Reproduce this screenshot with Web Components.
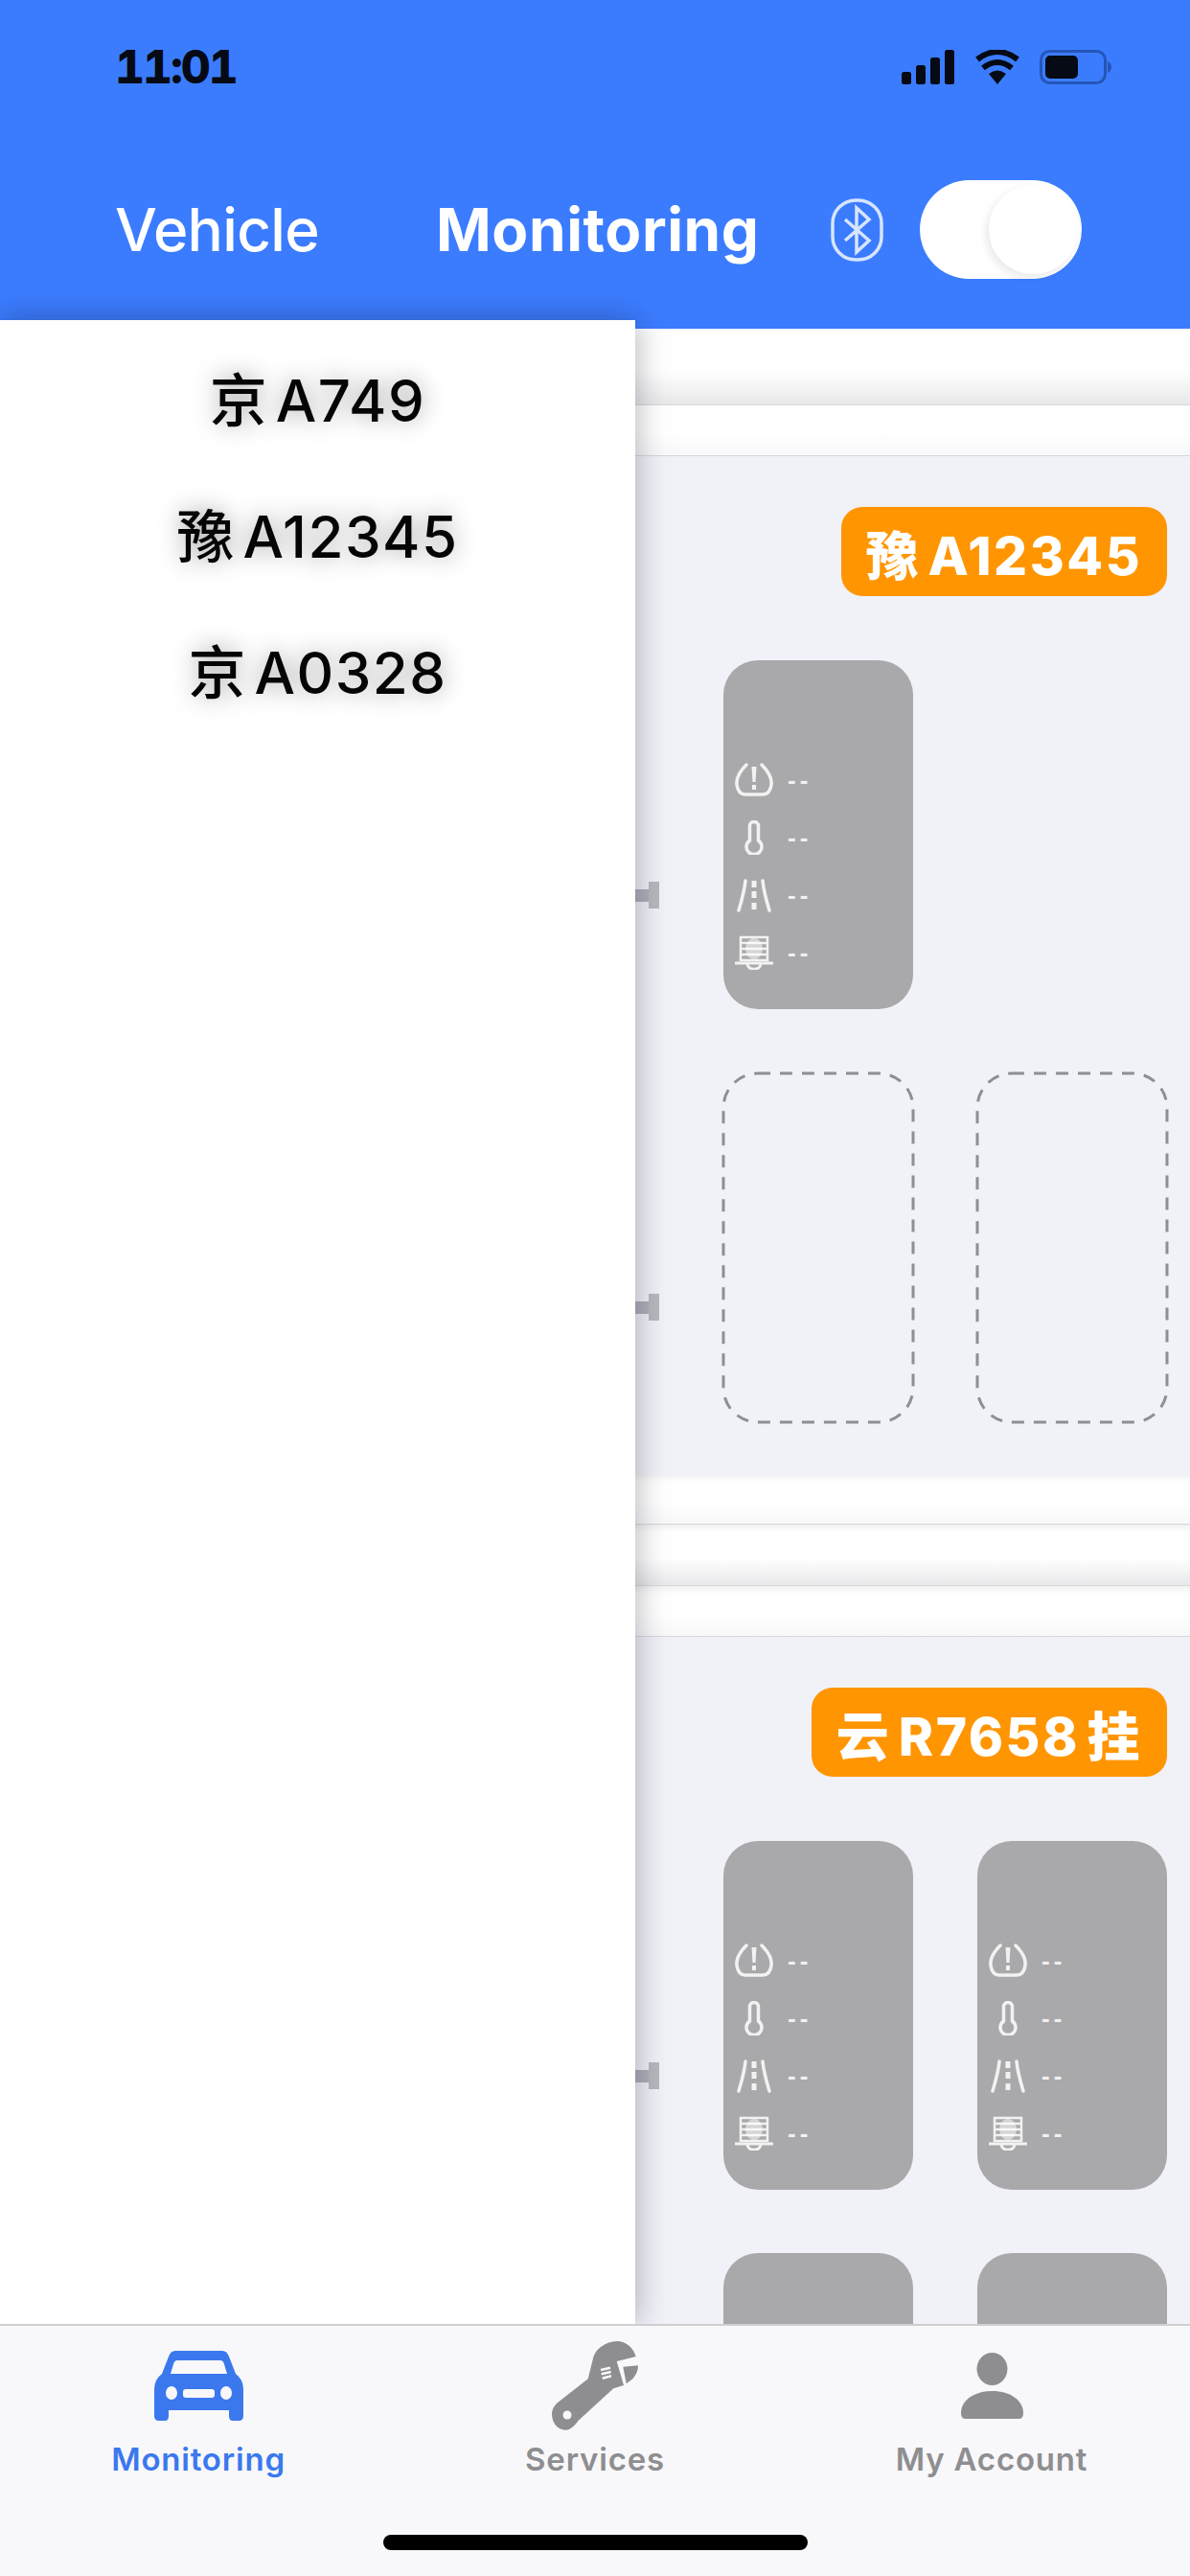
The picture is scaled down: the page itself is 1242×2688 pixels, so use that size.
<!DOCTYPE html>
<html lang="en">
<head>
<meta charset="utf-8">
<title>Monitoring</title>
<style>
  html, body { margin: 0; padding: 0; background: #fff; }
  body { font-family: Inter, "Noto Sans CJK SC", sans-serif; }
</style>
</head>
<body>
<phone-frame>
  <nav-header slot="header"></nav-header>

  <stripe-band size="80" shade="strong"></stripe-band>
  <stripe-band size="53"></stripe-band>
  <vehicle-card plate="豫 A12345">
    <axle-row>
      <tire-card></tire-card>
      <tire-card kind="none"></tire-card>
    </axle-row>
    <axle-row>
      <tire-card kind="empty"></tire-card>
      <tire-card kind="empty"></tire-card>
    </axle-row>
  </vehicle-card>
  <stripe-band size="53" top></stripe-band>
  <stripe-band size="64" shade="strong" top></stripe-band>
  <stripe-band size="53" top></stripe-band>
  <vehicle-card plate="云 R7658 挂">
    <axle-row>
      <tire-card></tire-card>
      <tire-card></tire-card>
    </axle-row>
    <axle-row>
      <tire-card></tire-card>
      <tire-card></tire-card>
    </axle-row>
  </vehicle-card>

  <plate-drawer slot="drawer">
    <span>京 A749</span>
    <span>豫 A12345</span>
    <span>京 A0328</span>
  </plate-drawer>

  <tab-bar slot="tabs">
    <tab-item label="Monitoring" icon="car" active></tab-item>
    <tab-item label="Services" icon="wrench"></tab-item>
    <tab-item label="My Account" icon="person"></tab-item>
  </tab-bar>
</phone-frame>

<script>
(function (customElements) {

  const FONT = 'Inter, "Noto Sans CJK SC", sans-serif';

  // tyre sensor glyphs, all drawn on the same 40x36 box
  const SENSOR_ICONS = [
    `<path d="M12 2C5 9 1 16 2 23c1 7 4 10 9 10h18c5 0 8-3 9-10 1-7-3-14-10-21" fill="none" stroke="currentColor" stroke-width="3.500" stroke-linecap="round"/>
     <path d="M17.500 4h5l-1 16h-3z" fill="currentColor"/><rect x="18" y="23" width="4" height="5" fill="currentColor"/>`,
    `<path d="M15.500 21V6a4.500 4.500 0 0 1 9 0v15a8 8 0 1 1-9 0z" fill="none" stroke="currentColor" stroke-width="3.500"/>`,
    `<path d="M11 3C10 14 7 24 4 34M29 3c1 11 4 21 7 31" fill="none" stroke="currentColor" stroke-width="3.500" stroke-linecap="round"/>
     <path d="M20 3v7M20 14v7M20 26v7" stroke="currentColor" stroke-width="5"/>`,
    `<path d="M6 2h28v24H6zM6 8h28M6 14h28M6 20h28" fill="none" stroke="currentColor" stroke-width="2.500"/>
     <ellipse cx="20" cy="14" rx="9" ry="11" fill="currentColor" opacity=".6"/>
     <path d="M1 29h38M13 30c1 7 13 7 14 0" fill="none" stroke="currentColor" stroke-width="3" stroke-linecap="round"/>`
  ];

  const TAB_ICONS = {
    car: `<svg width="93" height="73" viewBox="0 0 93 73">
      <path fill="currentColor" d="M22 0H71Q76 0 78 6L85 24Q93 30 93 40V68Q93 73 88 73H82Q78 73 78 68V62H15V68Q15 73 11 73H5Q0 73 0 68V40Q0 30 8 24L15 6Q17 0 22 0Z"/>
      <g fill="#f8f8fa">
        <path d="M24 10H69Q72 10 73 14L76 24H17L20 14Q21 10 24 10Z"/>
        <ellipse cx="18" cy="44" rx="6" ry="7"/><ellipse cx="75" cy="44" rx="6" ry="7"/>
        <rect x="30" y="40" width="33" height="9" rx="3"/>
      </g></svg>`,
    wrench: `<svg width="90" height="93" viewBox="0 0 90 93">
      <path fill="currentColor" d="M67.700 0C78 0 85 7 87.700 16L67.700 21L75 46L64.300 49.300L27.700 82.700C24 88 19 92.700 14.300 92.700C6 92.700 0 85 0 76C0 71 3 66 7.700 62.700L37.700 39.300L42.700 19.300C44 13 47 9 51 6C56 2 62 0 67.700 0Z"/>
      <path fill="currentColor" d="M74.300 26.700L90 25.300C90 31 88 35 84.300 39.300L77.700 44.300Z"/>
      <circle cx="16" cy="77" r="4.500" fill="#f8f8fa"/>
      <path d="M51 30L61 27.700M51.700 34.300L61.700 32M52.700 38.700L62 36.300" stroke="#f8f8fa" stroke-width="2.500"/></svg>`,
    person: `<svg width="65" height="69" viewBox="0 0 65 69">
      <ellipse cx="32.500" cy="17" rx="16" ry="17" fill="currentColor"/>
      <path fill="currentColor" d="M0 63C0 50 13 40 32.500 40C52 40 65 50 65 63Q65 69 60 69H5Q0 69 0 63Z"/></svg>`
  };

  const createTemplate = (html) => {
    const template = document.createElement('template');
    template.innerHTML = html;
    return template;
  };

  // small base class, every element below only differs by its markup
  class ShadowElement extends HTMLElement {
    constructor() {
      super();
      this.attachShadow({ mode: 'open' });
    }
    connectedCallback() {
      this.shadowRoot.innerHTML = '';
      this.shadowRoot.appendChild(createTemplate(this.markup()).content.cloneNode(true));
    }
  }

  class PhoneFrame extends ShadowElement {
    markup() {
      return `
      <style>
        :host { display: flex; flex-direction: column; position: relative; width: 1242px; height: 2688px; overflow: hidden; background: #fff; font-family: ${FONT}; }
        .body { flex: 1; min-height: 0; overflow: hidden; display: flex; flex-direction: column; }
        .drawer { position: absolute; left: 0; top: 334px; bottom: 263px; width: 663px; z-index: 2; }
        .tabs { position: relative; z-index: 3; }
      </style>
      <slot name="header"></slot>
      <div class="body"><slot></slot></div>
      <div class="drawer"><slot name="drawer"></slot></div>
      <div class="tabs"><slot name="tabs"></slot></div>`;
    }
  }
  customElements.define('phone-frame', PhoneFrame);

  class NavHeader extends ShadowElement {
    markup() {
      return `
      <style>
        :host { display: block; height: 343px; box-sizing: border-box; background: #3b7cff; padding: 52px 0 0 120px; }
        .status { display: flex; align-items: center; height: 36px; }
        .time { width: 821px; font-size: 48px; font-weight: 800; line-height: 36px; color: #050a14; font-variant-numeric: tabular-nums; letter-spacing: -2px; }
        .sys { display: flex; align-items: center; }
        .wifi { margin-left: 21px; }
        .bat { margin-left: 20px; }
        .nav { display: flex; align-items: center; height: 103px; margin-top: 100px; color: #fff; font-size: 62px; line-height: 103px; }
        .vehicle { width: 335px; font-weight: 500; letter-spacing: -.7px; }
        .monitoring { width: 412px; font-weight: 700; letter-spacing: .6px; }
        .bt { display: block; margin-right: 38px; }
        .toggle { width: 169px; height: 103px; box-sizing: border-box; padding: 5px 4px; border-radius: 52px; background: #fff; display: flex; justify-content: flex-end; }
        .knob { width: 93px; height: 93px; border-radius: 50%; background: #fff; box-shadow: -3px 4px 10px rgba(0,0,0,.09); }
      </style>
      <div class="status">
        <div class="time">11:01</div>
        <div class="sys">
          <svg width="55" height="36" viewBox="0 0 55 36" fill="#050a14">
            <rect x="0" y="23" width="10" height="13" rx="2.500"/><rect x="15" y="16" width="10" height="20" rx="2.500"/>
            <rect x="30" y="8" width="10" height="28" rx="2.500"/><rect x="45" y="0" width="10" height="36" rx="2.500"/>
          </svg>
          <svg class="wifi" width="48" height="36" viewBox="0 0 48 36">
            <path d="M24 36L15 25Q24 18 33 25Z" fill="#050a14"/>
            <path d="M9 19Q24 7 39 19M3 10Q24 -6 45 10" fill="none" stroke="#050a14" stroke-width="6"/>
          </svg>
          <svg class="bat" width="75" height="36" viewBox="0 0 75 36">
            <rect x="1.500" y="1.500" width="67" height="33" rx="9" fill="none" stroke="#2456b8" stroke-width="3"/>
            <rect x="6" y="6" width="34" height="24" rx="5" fill="#050a14"/>
            <path d="M71 12Q75 14 75 18Q75 22 71 24Z" fill="#2456b8"/>
          </svg>
        </div>
      </div>
      <div class="nav">
        <div class="vehicle">Vehicle</div>
        <div class="monitoring">Monitoring</div>
        <svg class="bt" width="55" height="66" viewBox="0 0 55 66" fill="none" stroke="#fff" stroke-opacity=".8">
          <rect x="2" y="2" width="51" height="62" rx="24" stroke-width="3.500"/>
          <path d="M15 22L40 44L27 56V10L40 22L15 44" stroke-width="3.500"/>
        </svg>
        <div class="toggle"><div class="knob"></div></div>
      </div>`;
    }
  }
  customElements.define('nav-header', NavHeader);

  class StripeBand extends ShadowElement {
    markup() {
      const size = this.getAttribute('size') || 53;
      const end = this.getAttribute('shade') === 'strong' ? '#e8e8ea' : '#f8f8fa';
      const top = this.hasAttribute('top') ? 'box-shadow: inset 0 7px 7px -4px rgba(0,0,0,.07);' : '';
      return `
      <style>
        :host { display: block; flex: none; height: ${size}px; box-sizing: border-box; border-bottom: 1px solid #d8d8dc; background: linear-gradient(#fff 55%, ${end}); ${top} }
      </style>`;
    }
  }
  customElements.define('stripe-band', StripeBand);

  class VehicleCard extends ShadowElement {
    markup() {
      return `
      <style>
        :host { display: flex; flex: none; flex-direction: column; align-items: flex-end; box-sizing: border-box; padding: 53px 24px 55px 0; gap: 67px; background: #f1f1f8; }
        .plate { height: 93px; box-sizing: border-box; padding: 0 26px; display: flex; align-items: center; border-radius: 22px; background: #ff9500; color: #fff; font-size: 55px; font-weight: 800; letter-spacing: 2.500px; word-spacing: -7px; white-space: nowrap; }
        .rows { display: flex; flex-direction: column; gap: 66px; }
      </style>
      <div class="plate">${this.getAttribute('plate') || ''}</div>
      <div class="rows"><slot></slot></div>`;
    }
  }
  customElements.define('vehicle-card', VehicleCard);

  class AxleRow extends ShadowElement {
    markup() {
      return `
      <style>
        :host { display: flex; gap: 67px; }
        .stub { display: flex; align-items: center; align-self: center; margin-top: 126px; }
        .bar { width: 14px; height: 13px; background: #b0b0bc; }
        .head { width: 11px; height: 28px; background: #b8b8be; }
      </style>
      <div class="stub"><div class="bar"></div><div class="head"></div></div>
      <slot></slot>`;
    }
  }
  customElements.define('axle-row', AxleRow);

  class TireCard extends ShadowElement {
    markup() {
      const kind = this.getAttribute('kind');
      const base = ':host { display: block; width: 198px; height: 364px; box-sizing: border-box; }';
      if (kind === 'none') {
        return `<style>${base} :host { visibility: hidden; }</style>`;
      }
      if (kind === 'empty') {
        return `<style>${base} svg { display: block; overflow: visible; }</style>
        <svg width="198" height="364" viewBox="0 0 198 364">
          <rect x="0" y="1" width="198" height="364" rx="36" fill="none" stroke="#8e8e96" stroke-width="3" stroke-dasharray="13 10"/>
        </svg>`;
      }
      const rows = SENSOR_ICONS.map((icon) => `
        <div class="row">
          <svg width="40" height="36" viewBox="0 0 40 36">${icon}</svg>
          <span>--</span>
        </div>`).join('');
      return `
      <style>
        ${base}
        :host { padding: 95px 0 0 12px; border-radius: 36px; background: #a9a9ab; color: rgba(255,255,255,.85); }
        .row { display: flex; align-items: center; gap: 15px; height: 60px; }
        span { font-family: "Liberation Sans", sans-serif; font-size: 26px; font-weight: 700; letter-spacing: 4px; line-height: 60px; }
      </style>
      ${rows}`;
    }
  }
  customElements.define('tire-card', TireCard);

  class PlateDrawer extends ShadowElement {
    markup() {
      return `
      <style>
        :host { display: flex; flex-direction: column; align-items: center; box-sizing: border-box; height: 100%; padding-top: 13px; background: #fff; box-shadow: 0 0 32px rgba(20,20,40,.34); }
        ::slotted(span) { height: 142px; line-height: 142px; font-size: 60px; font-weight: 500; color: #050505; letter-spacing: 1.500px; word-spacing: -10px; white-space: nowrap; text-shadow: 0 0 24px rgba(0,0,0,.38); }
      </style>
      <slot></slot>`;
    }
  }
  customElements.define('plate-drawer', PlateDrawer);

  class TabBar extends ShadowElement {
    markup() {
      return `
      <style>
        :host { display: block; height: 263px; box-sizing: border-box; border-top: 2px solid #cfcfd2; background: #f8f8fa; padding-top: 12px; }
        .tabs { display: grid; grid-template-columns: repeat(3, 1fr); }
        .home { width: 443px; height: 16px; margin: 59px auto 0; border-radius: 8px; background: #000; }
      </style>
      <div class="tabs"><slot></slot></div>
      <div class="home"></div>`;
    }
  }
  customElements.define('tab-bar', TabBar);

  class TabItem extends ShadowElement {
    markup() {
      const active = this.hasAttribute('active');
      return `
      <style>
        :host { display: flex; flex-direction: column; align-items: center; color: ${active ? '#3b78ee' : '#8e8e90'}; }
        .icon { display: flex; align-items: center; justify-content: center; height: 100px; }
        .label { margin-top: 7px; font-size: 33px; font-weight: 600; line-height: 40px; letter-spacing: .8px; }
      </style>
      <div class="icon">${TAB_ICONS[this.getAttribute('icon')] || ''}</div>
      <div class="label">${this.getAttribute('label') || ''}</div>`;
    }
  }
  customElements.define('tab-item', TabItem);

})(window.customElements);
</script>
</body>
</html>
